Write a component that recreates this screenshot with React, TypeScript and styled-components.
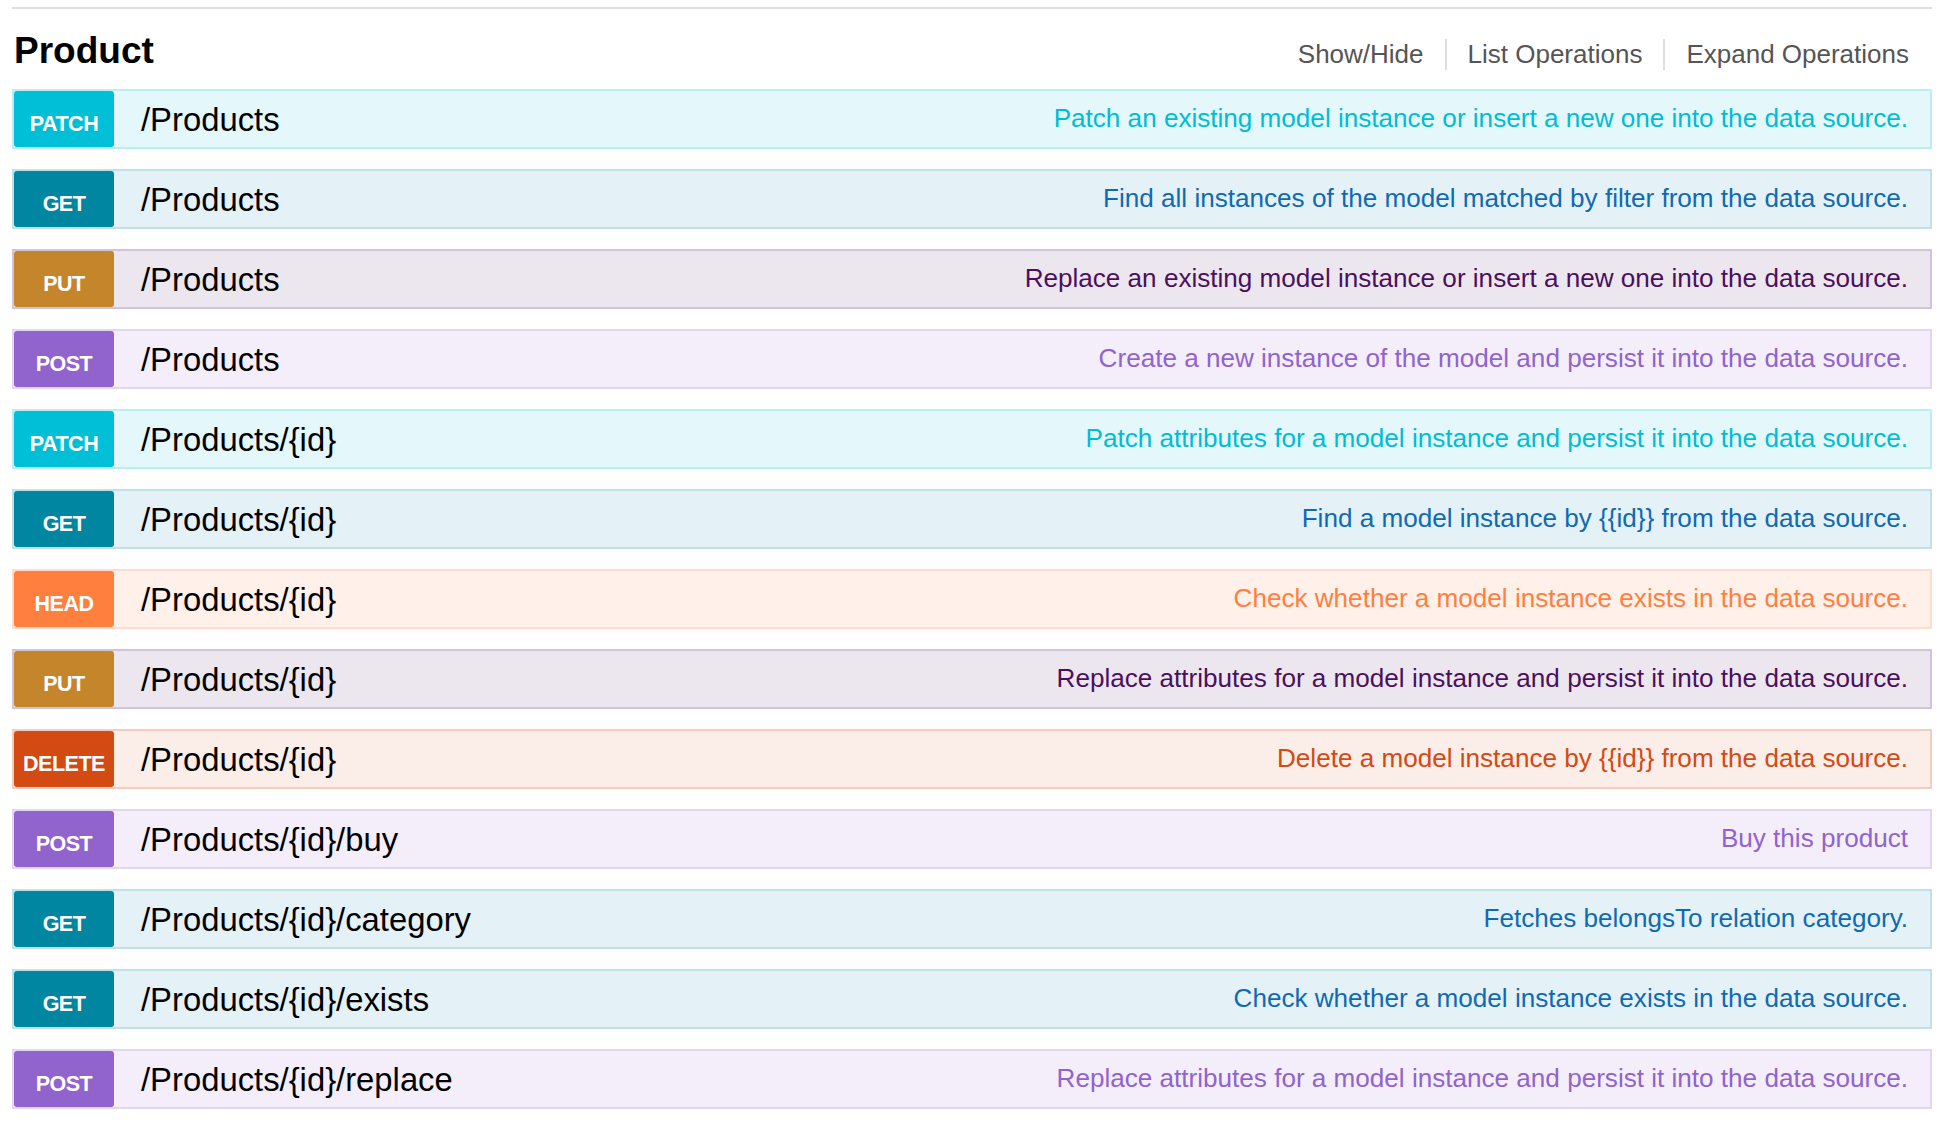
import * as React from "react";
import styled, { createGlobalStyle } from "styled-components";

type Method = "PATCH" | "GET" | "PUT" | "POST" | "HEAD" | "DELETE";

interface Tone {
  badge: string;
  bg: string;
  border: string;
  text: string;
}

const tones: Record<Method, Tone> = {
  PATCH: { badge: "#00bfd6", bg: "#e4f7fb", border: "#bcecf4", text: "#00bcd4" },
  GET: { badge: "#0186a1", bg: "#e4f1f6", border: "#c0e1e9", text: "#0f6ab4" },
  PUT: { badge: "#c5862b", bg: "#ece7ee", border: "#d3c3da", text: "#4c0f5e" },
  POST: { badge: "#9063cd", bg: "#f4eefb", border: "#e3d6f4", text: "#9063cd" },
  HEAD: { badge: "#ff7f3f", bg: "#fff0ea", border: "#ffdccb", text: "#ff7f3f" },
  DELETE: { badge: "#d34a12", bg: "#fbede8", border: "#f3cebf", text: "#d34a12" },
};

const operations: { method: Method; path: string; summary: string }[] = [
  { method: "PATCH", path: "/Products", summary: "Patch an existing model instance or insert a new one into the data source." },
  { method: "GET", path: "/Products", summary: "Find all instances of the model matched by filter from the data source." },
  { method: "PUT", path: "/Products", summary: "Replace an existing model instance or insert a new one into the data source." },
  { method: "POST", path: "/Products", summary: "Create a new instance of the model and persist it into the data source." },
  { method: "PATCH", path: "/Products/{id}", summary: "Patch attributes for a model instance and persist it into the data source." },
  { method: "GET", path: "/Products/{id}", summary: "Find a model instance by {{id}} from the data source." },
  { method: "HEAD", path: "/Products/{id}", summary: "Check whether a model instance exists in the data source." },
  { method: "PUT", path: "/Products/{id}", summary: "Replace attributes for a model instance and persist it into the data source." },
  { method: "DELETE", path: "/Products/{id}", summary: "Delete a model instance by {{id}} from the data source." },
  { method: "POST", path: "/Products/{id}/buy", summary: "Buy this product" },
  { method: "GET", path: "/Products/{id}/category", summary: "Fetches belongsTo relation category." },
  { method: "GET", path: "/Products/{id}/exists", summary: "Check whether a model instance exists in the data source." },
  { method: "POST", path: "/Products/{id}/replace", summary: "Replace attributes for a model instance and persist it into the data source." },
];

const GlobalStyle = createGlobalStyle`
  html, body {
    margin: 0;
    padding: 0;
    background: #fff;
  }
  body {
    font-family: "Liberation Sans", Arial, Helvetica, sans-serif;
  }
`;

const App = () => {
  return (
    <>
      <GlobalStyle />
      <Page>
        <Resource>
          <Heading>
            <Title>Product</Title>
            <Options>
              <Option>Show/Hide</Option>
              <Option>List Operations</Option>
              <Option>Expand Operations</Option>
            </Options>
          </Heading>
          <OperationList>
            {operations.map((op, i) => (
              <Operation key={i} $method={op.method}>
                <Badge $method={op.method}>{op.method}</Badge>
                <Path>{op.path}</Path>
                <Summary $method={op.method}>{op.summary}</Summary>
              </Operation>
            ))}
          </OperationList>
        </Resource>
      </Page>
    </>
  );
};

const Page = styled.div`
  padding: 7px 10px 0 12px;
`;

const Resource = styled.div`
  border-top: 2px solid #dddddd;
`;

const Heading = styled.div`
  display: flex;
  align-items: flex-start;
  justify-content: space-between;
  height: 80px;
`;

const Title = styled.h2`
  margin: 23px 0 0 2px;
  font-size: 37px;
  line-height: 37px;
  font-weight: bold;
  color: #000;
`;

const Options = styled.ul`
  display: flex;
  list-style: none;
  margin: 30px 0 0;
  padding: 0;
`;

const Option = styled.li`
  padding: 0 21px;
  border-right: 2px solid #dddddd;
  font-size: 26px;
  line-height: 31px;
  color: #555555;

  &:last-child {
    border-right: none;
    padding-right: 23px;
  }
`;

const OperationList = styled.div`
  display: flex;
  flex-direction: column;
  gap: 20px;
`;

const Operation = styled.div<{ $method: Method }>`
  display: flex;
  align-items: flex-start;
  height: 60px;
  box-sizing: border-box;
  background: ${(p) => tones[p.$method].bg};
  border: 2px solid ${(p) => tones[p.$method].border};
`;

const Badge = styled.span<{ $method: Method }>`
  flex: none;
  width: 100px;
  height: 56px;
  box-sizing: border-box;
  padding-top: 23px;
  border-radius: 3px;
  background: ${(p) => tones[p.$method].badge};
  color: #fff;
  font-size: 21.5px;
  line-height: 21px;
  font-weight: bold;
  letter-spacing: -0.5px;
  text-align: center;
`;

const Path = styled.span`
  flex: none;
  padding: 13px 0 0 27px;
  font-size: 32.8px;
  line-height: 32px;
  color: #000;
`;

const Summary = styled.span<{ $method: Method }>`
  flex: 1;
  padding: 14px 22px 0 0;
  text-align: right;
  font-size: 26.1px;
  line-height: 26px;
  color: ${(p) => tones[p.$method].text};
`;

export default App;
